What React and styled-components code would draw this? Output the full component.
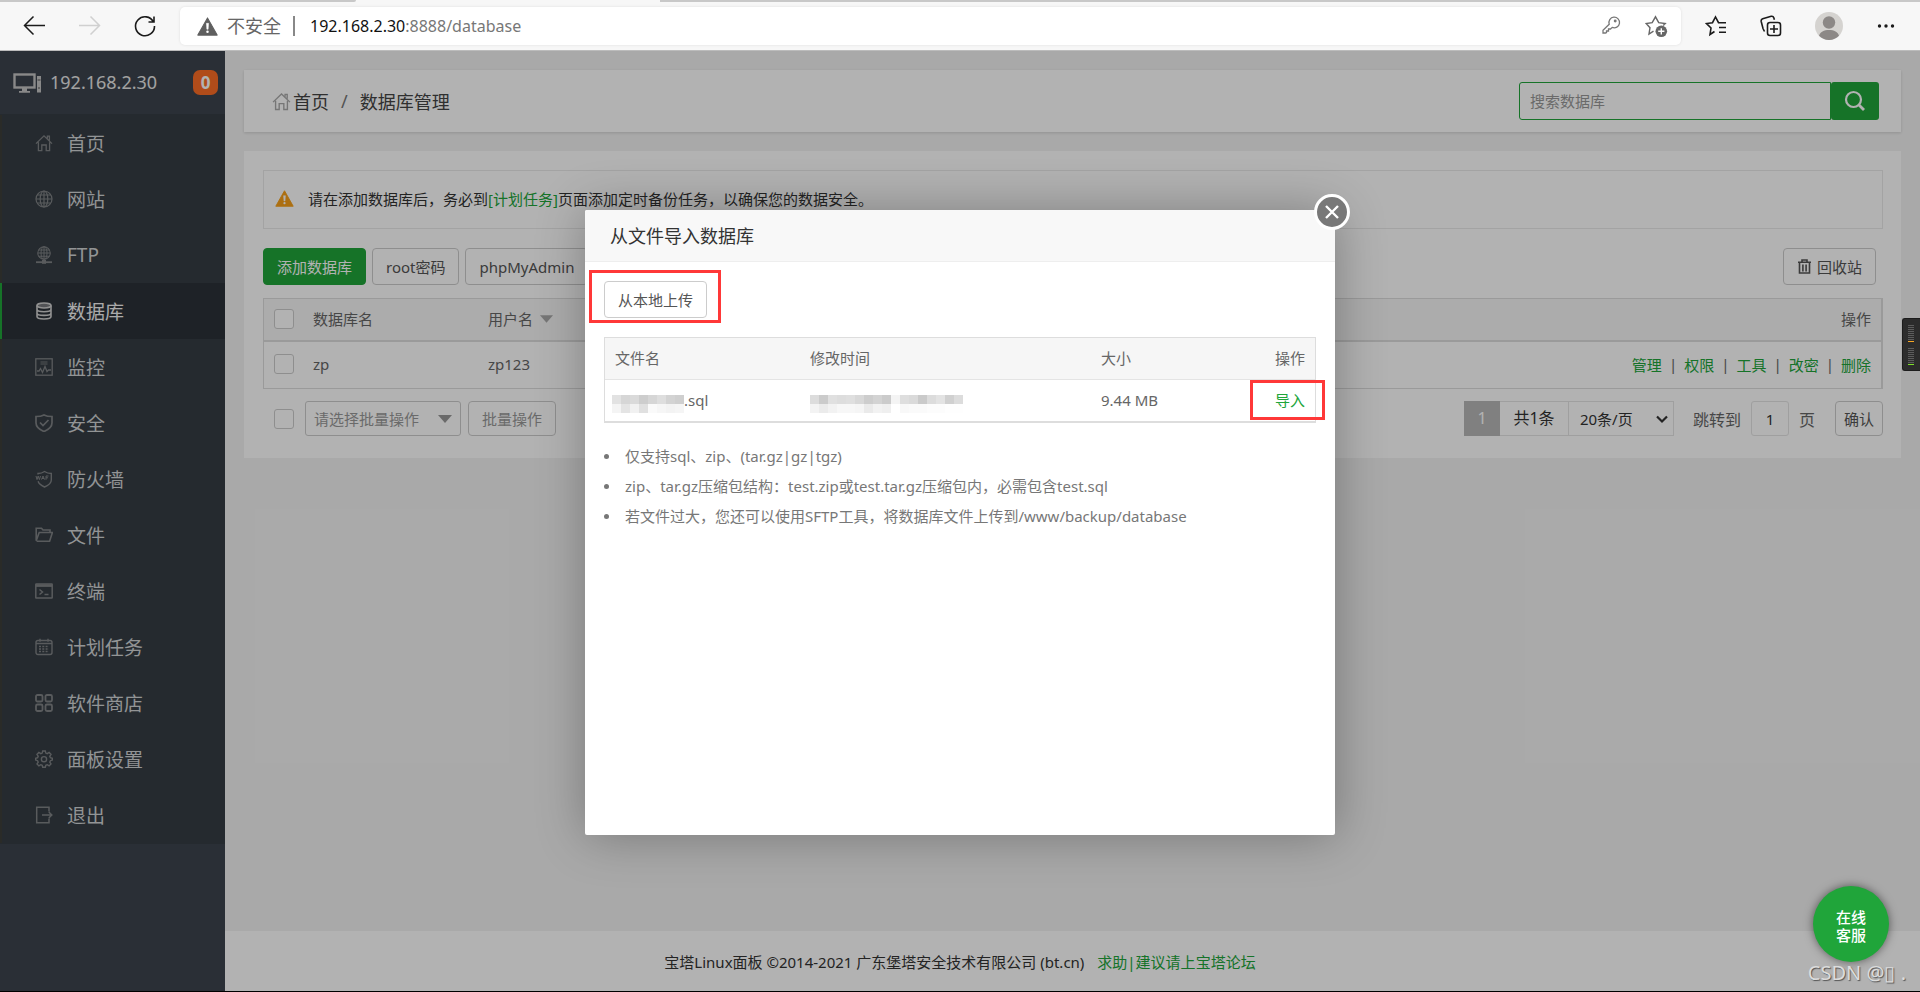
import React from "react";
import styled, { createGlobalStyle } from "styled-components";

const GlobalStyle = createGlobalStyle`
  *, *::before, *::after { box-sizing: border-box; }
  body { margin: 0; background: #f3f3f3; }
  body, button, input, select {
    font-family: "Noto Sans", "Noto Sans CJK SC", sans-serif;
    font-size: 15px;
  }
  button { cursor: pointer; }
  a { text-decoration: none; }
  svg { display: block; flex: none; }
`;

const GREEN = "#20a53a";

/* ---------- browser chrome ---------- */

const Screen = styled.div`
  display: flex;
  flex-direction: column;
  min-height: 100vh;
  border-bottom: 1px solid #000;
`;

const TabEdge = styled.div`
  display: flex;
  justify-content: space-between;
  height: 2px;
  background: #f7f7f7;
`;

const TabGroup = styled.div`
  flex: ${(p) => p.$grow};
  background: #c8c8c8;
  border-radius: 0 0 ${(p) => (p.$round ? "2px" : "0")} 0;
`;

const TabOpen = styled.div`
  flex: 304;
`;

const BrowserBar = styled.header`
  display: flex;
  align-items: center;
  height: 49px;
  padding: 0 24px 0 23px;
  background: #f7f7f7;
  border-bottom: 1px solid #bcbcbc;
`;

const NavButtons = styled.div`
  display: flex;
  gap: 32px;
  margin-right: 23px;
`;

const IconButton = styled.button`
  display: flex;
  padding: 0;
  border: 0;
  background: none;
  color: ${(p) => p.$color || "#1b1b1b"};
`;

const AddressBar = styled.div`
  display: flex;
  flex: 1;
  align-items: center;
  height: 38px;
  padding: 0 13px 0 17px;
  border-radius: 5px;
  background: #fff;
  box-shadow: 0 0 3px rgba(0, 0, 0, 0.1);
`;

const Insecure = styled.span`
  margin-left: 9px;
  padding-right: 12px;
  border-right: 2px solid #888;
  color: #666;
  font-size: 18px;
  line-height: 20px;
`;

const Address = styled.span`
  flex: 1;
  margin-left: 15px;
  color: #777;
  font-size: 16px;

  b { color: #111; font-weight: 400; }
`;

const AddressTools = styled.div`
  display: flex;
  gap: 24px;
`;

const BrowserTools = styled.div`
  display: flex;
  align-items: center;
  gap: 33px;
  margin-left: 24px;
`;

/* ---------- panel frame ---------- */

const Panel = styled.div`
  position: relative;
  display: flex;
  flex: 1;
`;

const Sidebar = styled.aside`
  flex: 0 0 225px;
  background: #3d444e;
`;

const Host = styled.div`
  display: flex;
  align-items: center;
  height: 63px;
  padding: 0 7px 0 13px;
  color: #e8e8e8;
  font-size: 18px;
`;

const HostName = styled.span`
  flex: 1;
  margin-left: 8px;
  padding-bottom: 2px;
`;

const Badge = styled.span`
  width: 25px;
  border-radius: 7px;
  background: #fc6d26;
  color: #fff;
  font-size: 17px;
  font-weight: 700;
  line-height: 25px;
  text-align: center;
`;

const Menu = styled.nav`
  padding: 1px 0;
  background: #353d44;
`;

const MenuItem = styled.a`
  display: flex;
  align-items: center;
  gap: 14px;
  height: 56px;
  padding-left: 33px;
  border-left: 2px solid ${(p) => (p.$active ? GREEN : "#3d3e3a")};
  background: ${(p) => (p.$active ? "#2c3138" : "transparent")};
  color: ${(p) => (p.$active ? "#f4f4f4" : "#d2d4d6")};
  font-size: 19px;

  svg { color: ${(p) => (p.$active ? "#d0d0d0" : "#808386")}; }
`;

const Main = styled.main`
  display: flex;
  flex: 1;
  flex-direction: column;
  gap: 19px;
  min-width: 0;
  padding-top: 19px;
  background: #f3f3f3;
`;

const Card = styled.section`
  margin: 0 19px;
  background: #fff;
`;

const CrumbCard = styled(Card)`
  display: flex;
  align-items: center;
  justify-content: space-between;
  height: 62px;
  padding: 0 22px 0 28px;
  box-shadow: 0 1px 3px rgba(0, 0, 0, 0.15);
`;

const Crumbs = styled.div`
  display: flex;
  align-items: center;
  color: #777;
  font-size: 18px;

  a { margin-left: 2px; color: #444; }
  i { margin: 0 12px; font-style: normal; }
  b { color: #444; font-weight: 400; }
  svg { color: #aaa; }
`;

const SearchForm = styled.form`
  display: flex;
  height: 38px;
`;

const SearchInput = styled.input`
  width: 312px;
  padding: 0 10px;
  border: 1px solid ${GREEN};
  border-radius: 3px 0 0 3px;
  background: #fff;

  &::placeholder { color: #999; }
`;

const SearchButton = styled.button`
  display: flex;
  align-items: center;
  justify-content: center;
  width: 48px;
  padding: 0;
  border: 0;
  border-radius: 3px;
  background: ${GREEN};
  color: #fff;
`;

const DataCard = styled(Card)`
  padding: 19px 18px 22px 19px;
`;

const Notice = styled.div`
  display: flex;
  align-items: center;
  gap: 14px;
  height: 59px;
  padding: 0 11px 2px;
  border: 1px solid #eaeaea;
  color: #333;

  a { color: ${GREEN}; }
`;

const Toolbar = styled.div`
  display: flex;
  gap: 6px;
  margin: 19px 7px 13px 0;
`;

const Button = styled.button`
  display: flex;
  align-items: center;
  gap: 5px;
  height: ${(p) => (p.$small ? "35px" : "37px")};
  padding: 0 ${(p) => (p.$tight ? "8px" : "13px")};
  border: 1px solid ${(p) => (p.$primary ? GREEN : "#ccc")};
  border-radius: 4px;
  background: ${(p) => (p.$primary ? GREEN : "#fff")};
  color: ${(p) => (p.$primary ? "#fff" : p.$muted ? "#999" : "#555")};
  white-space: nowrap;
`;

const PushRight = styled.div`
  margin-left: auto;
`;

const DataTable = styled.table`
  width: 100%;
  border: 1px solid #ddd;
  border-right-width: 2px;
  border-spacing: 0;
  table-layout: fixed;
  color: #666;

  th {
    height: 43px;
    padding: 0 10px 2px;
    border-bottom: 2px solid #ddd;
    background: #f6f6f6;
    font-weight: 400;
    text-align: left;
  }
  td { height: 46px; padding: 0 10px 2px; }
  th:last-child, td:last-child { text-align: right; }
`;

const Checkbox = styled.input.attrs({ type: "checkbox" })`
  display: block;
  width: 20px;
  height: 20px;
  margin: 0;
  border: 1px solid #ccc;
  border-radius: 3px;
  background: #fff;
  appearance: none;
`;

const SortLabel = styled.span`
  display: flex;
  align-items: center;
  gap: 7px;
  color: #666;

  svg { color: #aaa; }
`;

const Actions = styled.div`
  display: flex;
  justify-content: flex-end;
  gap: 7px;

  a { color: ${GREEN}; }
`;

const TableFoot = styled.div`
  display: flex;
  align-items: center;
  margin-top: 12px;
  padding-left: 11px;
`;

const Batch = styled.div`
  display: flex;
  align-items: center;
  gap: 7px;
  margin-left: 11px;
`;

const SelectBox = styled.div`
  position: relative;
  width: ${(p) => p.$width}px;

  svg {
    position: absolute;
    top: 50%;
    right: ${(p) => (p.$page ? "6px" : "9px")};
    transform: translateY(-50%);
    color: ${(p) => (p.$page ? "#333" : "#999")};
    pointer-events: none;
  }
`;

const Select = styled.select`
  width: 100%;
  height: 35px;
  padding: 0 ${(p) => (p.$page ? "11px" : "8px")};
  border: 1px solid ${(p) => (p.$page ? "#e4e4e4" : "#ccc")};
  border-left-width: ${(p) => (p.$page ? 0 : "1px")};
  border-radius: ${(p) => (p.$page ? 0 : "3px")};
  background: #fff;
  color: ${(p) => (p.$page ? "#333" : "#999")};
  appearance: none;
`;

const Pager = styled.div`
  display: flex;
  align-items: center;
  margin-left: auto;
  color: #666;
  font-size: 16px;
`;

const PageNow = styled.span`
  width: 36px;
  background: #b8b8b8;
  color: #fff;
  line-height: 35px;
  text-align: center;
`;

const PageTotal = styled.span`
  width: 69px;
  border: 1px solid #e4e4e4;
  border-left: 0;
  color: #333;
  line-height: 33px;
  text-align: center;
`;

const JumpLabel = styled.label`
  display: flex;
  align-items: center;
  gap: 10px;
  margin: 0 20px 0 19px;
`;

const JumpInput = styled.input`
  width: 38px;
  height: 35px;
  padding: 0;
  border: 1px solid #e4e4e4;
  border-radius: 3px;
  background: #fff;
  color: #333;
  text-align: center;
`;

const Footer = styled.footer`
  display: flex;
  align-items: center;
  justify-content: center;
  gap: 13px;
  height: 60px;
  margin-top: auto;
  padding-right: 225px;
  background: #fff;
  color: #333;

  a { color: ${GREEN}; }
`;

/* ---------- dialog ---------- */

const Overlay = styled.div`
  position: absolute;
  inset: 0;
  display: flex;
  align-items: center;
  justify-content: center;
  padding-top: 3px;
  background: rgba(0, 0, 0, 0.3);
`;

const Dialog = styled.div`
  position: relative;
  width: 750px;
  height: 625px;
  border-radius: 2px;
  background: #fff;
  box-shadow: 1px 1px 50px rgba(0, 0, 0, 0.3);
`;

const DialogTitle = styled.h2`
  height: 52px;
  margin: 0;
  padding: 0 25px;
  border-bottom: 1px solid #eee;
  border-radius: 2px 2px 0 0;
  background: #f8f8f8;
  color: #333;
  font-size: 18px;
  font-weight: 400;
  line-height: 52px;
`;

const CloseButton = styled.button`
  position: absolute;
  top: -16px;
  right: -15px;
  display: flex;
  align-items: center;
  justify-content: center;
  width: 36px;
  height: 36px;
  padding: 0;
  border: 3px solid #fff;
  border-radius: 50%;
  background: #787878;
  color: #fff;
`;

const DialogBody = styled.div`
  display: flex;
  flex-direction: column;
  align-items: flex-start;
  gap: 19px;
  padding: 19px;
`;

const Marked = styled.div`
  position: relative;

  &::after {
    position: absolute;
    inset: ${(p) => p.$inset};
    border: 3px solid #ff3838;
    content: "";
    pointer-events: none;
  }
`;

const FileTable = styled.table`
  width: 100%;
  border: 1px solid #ddd;
  border-bottom-width: 2px;
  border-spacing: 0;
  table-layout: fixed;
  color: #666;

  th {
    height: 42px;
    padding: 0 10px 2px;
    border-bottom: 1px solid #e4e4e4;
    background: #f6f6f6;
    font-weight: 400;
    text-align: left;
  }
  td { height: 41px; padding: 0 10px 2px; }
  th:last-child, td:last-child { text-align: right; }
`;

const FileName = styled.div`
  display: flex;
  align-items: center;
  margin-left: -3px;
`;

const MosaicBox = styled.svg`
  margin-top: 8px;
`;

const ImportLink = styled.a`
  color: ${GREEN};
`;

const ImportMark = styled(Marked)`
  display: inline-block;
`;

const Tips = styled.ul`
  margin: -1px 0 0;
  padding: 0;
  color: #777;
  line-height: 30px;
  list-style: none;
`;

const Tip = styled.li`
  display: flex;
  align-items: center;
  gap: 16px;

  &::before {
    width: 5px;
    height: 5px;
    border-radius: 50%;
    background: #777;
    content: "";
  }
`;

/* ---------- floating parts ---------- */

const ChatButton = styled.button`
  position: absolute;
  right: 31px;
  bottom: 29px;
  width: 76px;
  height: 76px;
  padding: 4px 20px 0;
  border: 0;
  border-radius: 50%;
  background: ${GREEN};
  box-shadow: 0 0 10px rgba(0, 0, 0, 0.5);
  color: #fff;
  font-weight: 500;
  line-height: 18px;
`;

const Watermark = styled.span`
  position: absolute;
  right: 14px;
  bottom: 4px;
  color: #dcdcdc;
  font-size: 20px;
  line-height: 28px;
  text-shadow: 1px 1px 1px #555;
`;

const Meter = styled.div`
  position: absolute;
  top: 267px;
  right: 0;
  display: flex;
  flex-direction: column;
  gap: 6px;
  width: 18px;
  height: 53px;
  padding: 6px 0 0 5px;
  border: 1px solid #1c1c1c;
  border-right: 0;
  border-radius: 3px 0 0 3px;
  background: #2c2c2c;
`;

/* ---------- drawings ---------- */

const Line = ({ size = 18, w = 1.3, children, vb = 18 }) => (
  <svg
    width={size}
    height={size}
    viewBox={`0 0 ${vb} ${vb}`}
    fill="none"
    stroke="currentColor"
    strokeWidth={w}
    aria-hidden="true"
  >
    {children}
  </svg>
);

const HomeIcon = ({ size = 18 }) => (
  <Line size={size}>
    <path d="M1 9.6 9 1.8l8 7.8M3.4 8.2V16.6h3.4V11h4.4v5.600h3.4V8.2M12.400 4.600V2.200h2v4.200" />
  </Line>
);

const GlobeLines = () => (
  <>
    <ellipse cx="9" cy="9" rx="3.8" ry="8" />
    <path d="M9 1v16M1 9h16M2.200 5h13.600M2.200 13h13.600" />
  </>
);

const WarnIcon = ({ w, h, fill }) => (
  <svg width={w} height={h} viewBox="0 0 20 18" aria-hidden="true">
    <path d="M10 .8 19.200 17.200H.8Z" fill={fill} stroke={fill} strokeLinejoin="round" />
    <path d="M9 6h2l-.4 5.600H9.400Z" fill="#fff" stroke="#fff" strokeWidth=".5" />
    <circle cx="10" cy="14" r="1.200" fill="#fff" />
  </svg>
);

const Triangle = ({ w, h }) => (
  <svg width={w} height={h} viewBox="0 0 14 8" aria-hidden="true">
    <path d="M0 0h14L7 8Z" fill="currentColor" />
  </svg>
);

const MENU = [
  ["首页", <HomeIcon />],
  ["网站", <Line w={1.2}><circle cx="9" cy="9" r="8" /><GlobeLines /></Line>],
  [
    "FTP",
    <Line w={1.3}>
      <g transform="translate(2 0) scale(.78)"><circle cx="9" cy="9" r="8" /><GlobeLines /></g>
      <path d="M1 16.200h16" strokeWidth="1.800" />
      <path d="M9 14v3.800" strokeWidth="4" />
    </Line>,
  ],
  [
    "数据库",
    <Line w={1.6}>
      <ellipse cx="9" cy="3.500" rx="7" ry="2.500" fill="currentColor" fillOpacity=".45" />
      <path d="M2 3.500v11c0 1.400 3 2.500 7 2.500s7-1.100 7-2.500v-11M2 7.200c0 1.400 3 2.500 7 2.500s7-1.100 7-2.500M2 10.900c0 1.400 3 2.500 7 2.500s7-1.100 7-2.500" />
    </Line>,
  ],
  [
    "监控",
    <Line>
      <rect x=".8" y=".8" width="16.400" height="16.400" />
      <path d="M5.500 4h7M5.500 6h7" opacity=".6" />
      <path d="M2 13h2l1.500-2.500 2 4 2.500-6 2 5 1.500-1.500H16" />
    </Line>,
  ],
  [
    "安全",
    <Line w={1.7}>
      <path d="M9 .9c2.500 1.300 5 1.600 8 1.600v6.300c0 4-3.500 6.900-8 8.700-4.500-1.800-8-4.700-8-8.700V2.500c3 0 5.500-.3 8-1.600Z" />
      <path d="m5 8.500 3 3 5.500-5.500" />
    </Line>,
  ],
  [
    "防火墙",
    <Line w={1.4}>
      <path d="M3 4.600V3.500c2.500 0 4.500-.6 6.500-2 2 1.400 4 2 6.800 2v6.500c0 3-3 5.400-6.800 7C6.200 15.400 3.700 13.400 3.100 11.200" />
      <path d="m1 6 1 3.600L3.200 6l1.200 3.600L5.500 6M6.500 9.600 8 6l1.500 3.600M7 8.500h2M11 9.800V6h2.500M11 7.800h2" strokeWidth="1" />
    </Line>,
  ],
  [
    "文件",
    <Line w={1.6}>
      <path d="M15 6.500V4H8L6.500 2.200H1.200v12.600L4.200 6.500h13.200l-2.800 8.800H1.600" />
    </Line>,
  ],
  [
    "终端",
    <Line w={1.5}>
      <rect x=".8" y="2" width="16.400" height="14" rx=".5" />
      <path d="M1 3.600h16" strokeWidth="2.600" />
      <path d="m4.500 7.500 3 2.500-3 2.500M9.500 12.500h4" />
    </Line>,
  ],
  [
    "计划任务",
    <Line w={1.4}>
      <rect x="1" y="2.500" width="16" height="14" rx="2" />
      <path d="M5 .8v3M13 .8v3M1 5.500h16" />
      <path d="M4 8.500h10M4 11h10M4 13.500h10" strokeDasharray="2 1.300" />
    </Line>,
  ],
  [
    "软件商店",
    <Line w={1.8}>
      <rect x="1" y="1" width="6.500" height="6.500" rx="1.500" />
      <rect x="10.500" y="1" width="6.500" height="6.500" rx="1.500" />
      <rect x="1" y="10.500" width="6.500" height="6.500" rx="1.500" />
      <rect x="10.500" y="10.500" width="6.500" height="6.500" rx="1.500" />
    </Line>,
  ],
  [
    "面板设置",
    <Line w={1.4}>
      <path d="M7.700 1h2.600l.5 2.100 1.400.6 1.900-1.200 1.900 1.900-1.200 1.900.6 1.400 1.900.5v1.900l-1.900.6-.6 1.400 1.200 1.900-1.900 1.900-1.900-1.200-1.400.6-.5 1.900H7.700l-.5-1.900-1.400-.6-1.900 1.200L2 14l1.200-1.900-.6-1.400-1.900-.6V8.200l1.900-.5.6-1.400L2 4.400l1.900-1.900 1.900 1.200 1.400-.6Z" />
      <circle cx="9" cy="9.200" r="2.600" />
    </Line>,
  ],
  [
    "退出",
    <Line w={1.5}>
      <path d="M14 5.500V1.200H1.700v15.600H14v-4.300M7 9h9.500M13.800 6l3 3-3 3" />
    </Line>,
  ],
];

const NAME_MOSAIC = [
  ["#e2e2e2", "#d6d6d6", "#dadada", "#cdcdcd", "#d6d6d6", "#dedede", "#d3d3d3", "#cfcfcf"],
  ["#f4f4f4", "#e4e4e4", "#f1f1f1", "#e0e0e0", "#fafafa", "#f6f6f6", "#f3f3f3", "#f5f5f5"],
];
const TIME_MOSAIC = [
  ["#dcdcdc", "#cbcbcb", "#e0e0e0", "#dddddd", "#dfdfdf", "#d8d8d8", "#cdcdcd", "#d3d3d3", "#cbcbcb", "#f4f4f4", "#dedede", "#dadada", "#cacaca", "#dcdcdc", "#e3e3e3", "#d0d0d0", "#dcdcdc"],
  ["#f3f3f3", "#ebebeb", "#f2f2f2", "#f7f7f7", "#f7f7f7", "#f5f5f5", "#eaeaea", "#f2f2f2", "#efefef", "#ffffff", "#f8f8f8", "#fafafa", "#fafafa", "#fcfcfc", "#fcfcfc", "#fefefe", "#fefefe"],
];

const Mosaic = ({ cells }) => (
  <MosaicBox width={cells[0].length * 9} height="18" aria-hidden="true">
    {cells.map((row, y) =>
      row.map((c, x) => (
        <rect key={`${x}-${y}`} x={x * 9} y={y * 9} width="9" height="9" fill={c} />
      ))
    )}
  </MosaicBox>
);

const MeterBars = ({ color }) => (
  <svg width="6" height="17" aria-hidden="true">
    {[0, 2, 4, 6, 8, 10, 12, 14].map((y) => (
      <rect key={y} y={y} width="6" height="1" fill="#5c5c5c" />
    ))}
    <rect y="16" width="6" height="1" fill={color} />
  </svg>
);

/* ---------- page ---------- */

function Browser() {
  return (
    <>
      <TabEdge>
        <TabGroup $grow={356} $round />
        <TabOpen />
        <TabGroup $grow={1260} />
      </TabEdge>
      <BrowserBar>
        <NavButtons>
          <IconButton aria-label="后退">
            <Line size={23} vb={23} w={1.5}><path d="M22 11.500H2M10.500 2.500l-9 9 9 9" /></Line>
          </IconButton>
          <IconButton aria-label="前进" $color="#d0d0d0">
            <Line size={23} vb={23} w={1.5}><path d="M1 11.500h20M12.500 2.500l9 9-9 9" /></Line>
          </IconButton>
          <IconButton aria-label="刷新">
            <Line size={24} vb={24} w={1.6}>
              <path d="M20.500 8A9.500 9.500 0 1 0 21.500 12M21 2.500V8h-5.500" />
            </Line>
          </IconButton>
        </NavButtons>
        <AddressBar>
          <WarnIcon w={21} h={19} fill="#5f5f5f" />
          <Insecure>不安全</Insecure>
          <Address><b>192.168.2.30</b>:8888/database</Address>
          <AddressTools>
            <IconButton aria-label="密码" $color="#777">
              <Line size={20} vb={20} w={1.3}>
                <path d="M8.200 9.200a5.300 5.300 0 1 1 3 3.200L9.500 14H7.500v2H5.500v1.500L4.500 18H2v-2.700Z" />
                <circle cx="14.200" cy="6" r=".8" fill="currentColor" />
              </Line>
            </IconButton>
            <IconButton aria-label="收藏" $color="#666">
              <Line size={23} vb={23} w={1.4}>
                <path d="M8.500 16.200 4 19l1-6.300L1.200 8.500l6-.8L10.500 1.800l3.200 5.900 6.500.8-2 2" />
                <circle cx="16.300" cy="16.300" r="5.800" fill="currentColor" stroke="none" />
                <path d="M16.300 13.200v6.200M13.200 16.300h6.200" stroke="#fff" />
              </Line>
            </IconButton>
          </AddressTools>
        </AddressBar>
        <BrowserTools>
          <IconButton aria-label="收藏夹">
            <Line size={22} vb={22} w={1.6}>
              <path d="M9.500 16.500 5 19.500l1-6.500L1.500 8.500l6-.8L10.500 2l3 5.700H21M14 12.500h7M14 17.300h7" />
            </Line>
          </IconButton>
          <IconButton aria-label="集锦">
            <Line size={22} vb={22} w={1.6}>
              <rect x="7.500" y="7.500" width="13" height="13" rx="2.500" />
              <path d="M14 10v8M10 14h8M4.500 16.500 3 13.500 1.200 6.500q-.4-2 1.500-2.700l8.500-2.500q2-.4 2.600 1.500l.6 2" />
            </Line>
          </IconButton>
          <IconButton aria-label="用户">
            <svg width="28" height="28" viewBox="0 0 28 28" aria-hidden="true">
              <circle cx="14" cy="14" r="14" fill="#d5d3d0" />
              <circle cx="14" cy="10.500" r="6.200" fill="#8c8886" />
              <path d="M4 23.800c1-4 5-5.800 10-5.800s9 1.800 10 5.800a14 14 0 0 1-20 0Z" fill="#8c8886" />
            </svg>
          </IconButton>
          <IconButton aria-label="更多">
            <svg width="20" height="20" viewBox="0 0 20 20" fill="currentColor" aria-hidden="true">
              <circle cx="3.500" cy="10" r="1.700" />
              <circle cx="10" cy="10" r="1.700" />
              <circle cx="16.500" cy="10" r="1.700" />
            </svg>
          </IconButton>
        </BrowserTools>
      </BrowserBar>
    </>
  );
}

function SideMenu() {
  return (
    <Sidebar>
      <Host>
        <svg width="29" height="22" viewBox="0 0 29 22" aria-hidden="true">
          <rect x="1.500" y="2.500" width="20" height="13" fill="none" stroke="#c4c4c4" strokeWidth="2.400" />
          <path d="M9 16h5v3h3v1.800H6V19h3Z" fill="#c4c4c4" />
          <rect x="24" y="4" width="4" height="16.500" fill="#c4c4c4" />
          <path d="M24.500 8h3M26 15v2" stroke="#555" />
        </svg>
        <HostName>192.168.2.30</HostName>
        <Badge>0</Badge>
      </Host>
      <Menu>
        {MENU.map(([label, icon]) => (
          <MenuItem key={label} href="#" $active={label === "数据库"}>
            {icon}
            {label}
          </MenuItem>
        ))}
      </Menu>
    </Sidebar>
  );
}

function Databases() {
  return (
    <DataCard>
      <Notice>
        <WarnIcon w={19} h={17} fill="#f7a01a" />
        <span>
          请在添加数据库后，务必到<a href="#">[计划任务]</a>页面添加定时备份任务，以确保您的数据安全。
        </span>
      </Notice>
      <Toolbar>
        <Button $primary>添加数据库</Button>
        <Button>root密码</Button>
        <Button>phpMyAdmin</Button>
        <PushRight>
          <Button>
            <Line size={15} vb={15} w={1.6}>
              <path d="M1 3.200h13M5 2.800V1h5v1.800M2.500 3.500v10.500h10V3.500M5.900 5.500v7M9.100 5.500v7" />
            </Line>
            回收站
          </Button>
        </PushRight>
      </Toolbar>
      <DataTable>
        <colgroup>
          <col style={{ width: 39 }} />
          <col style={{ width: 175 }} />
          <col style={{ width: 175 }} />
          <col />
        </colgroup>
        <thead>
          <tr>
            <th><Checkbox aria-label="全选" /></th>
            <th>数据库名</th>
            <th><SortLabel>用户名<Triangle w={13} h={8} /></SortLabel></th>
            <th>操作</th>
          </tr>
        </thead>
        <tbody>
          <tr>
            <td><Checkbox aria-label="zp" /></td>
            <td>zp</td>
            <td>zp123</td>
            <td>
              <Actions>
                {["管理", "权限", "工具", "改密", "删除"].map((t, i) => (
                  <React.Fragment key={t}>
                    {i > 0 && <span>|</span>}
                    <a href="#">{t}</a>
                  </React.Fragment>
                ))}
              </Actions>
            </td>
          </tr>
        </tbody>
      </DataTable>
      <TableFoot>
        <Checkbox aria-label="选择全部" />
        <Batch>
          <SelectBox $width={156}>
            <Select aria-label="批量操作类型"><option>请选择批量操作</option></Select>
            <Triangle w={14} h={8} />
          </SelectBox>
          <Button $small $muted>批量操作</Button>
        </Batch>
        <Pager>
          <PageNow>1</PageNow>
          <PageTotal>共1条</PageTotal>
          <SelectBox $width={105} $page>
            <Select $page aria-label="每页条数"><option>20条/页</option></Select>
            <Line size={12} vb={12} w={2.2}><path d="m1 3.500 5 5 5-5" /></Line>
          </SelectBox>
          <JumpLabel>
            跳转到
            <JumpInput defaultValue="1" />
            页
          </JumpLabel>
          <Button $small $tight>确认</Button>
        </Pager>
      </TableFoot>
    </DataCard>
  );
}

function ImportDialog() {
  return (
    <Dialog role="dialog" aria-label="从文件导入数据库">
      <DialogTitle>从文件导入数据库</DialogTitle>
      <CloseButton aria-label="关闭">
        <Line size={16} vb={16} w={2.4}><path d="m2 2 12 12M14 2 2 14" /></Line>
      </CloseButton>
      <DialogBody>
        <Marked $inset="-11px -14px -5px -15px">
          <Button>从本地上传</Button>
        </Marked>
        <FileTable>
          <colgroup>
            <col style={{ width: 195 }} />
            <col style={{ width: 291 }} />
            <col style={{ width: 140 }} />
            <col />
          </colgroup>
          <thead>
            <tr>
              <th>文件名</th>
              <th>修改时间</th>
              <th>大小</th>
              <th>操作</th>
            </tr>
          </thead>
          <tbody>
            <tr>
              <td><FileName><Mosaic cells={NAME_MOSAIC} />.sql</FileName></td>
              <td><Mosaic cells={TIME_MOSAIC} /></td>
              <td>9.44 MB</td>
              <td>
                <ImportMark $inset="-9px -20px -10px -25px">
                  <ImportLink href="#">导入</ImportLink>
                </ImportMark>
              </td>
            </tr>
          </tbody>
        </FileTable>
        <Tips>
          <Tip>仅支持sql、zip、(tar.gz|gz|tgz)</Tip>
          <Tip>zip、tar.gz压缩包结构：test.zip或test.tar.gz压缩包内，必需包含test.sql</Tip>
          <Tip>若文件过大，您还可以使用SFTP工具，将数据库文件上传到/www/backup/database</Tip>
        </Tips>
      </DialogBody>
    </Dialog>
  );
}

export default function App() {
  return (
    <Screen>
      <GlobalStyle />
      <Browser />
      <Panel>
        <SideMenu />
        <Main>
          <CrumbCard>
            <Crumbs>
              <HomeIcon size={19} />
              <a href="#">首页</a>
              <i>/</i>
              <b>数据库管理</b>
            </Crumbs>
            <SearchForm onSubmit={(e) => e.preventDefault()}>
              <SearchInput aria-label="搜索数据库" placeholder="搜索数据库" />
              <SearchButton aria-label="搜索">
                <Line size={22} vb={22} w={2.2}>
                  <circle cx="9.500" cy="9.500" r="7.500" />
                  <path d="m15 15 5 5" strokeWidth="2.800" />
                </Line>
              </SearchButton>
            </SearchForm>
          </CrumbCard>
          <Databases />
          <Footer>
            <span>宝塔Linux面板 ©2014-2021 广东堡塔安全技术有限公司 (bt.cn)</span>
            <a href="#">求助|建议请上宝塔论坛</a>
          </Footer>
        </Main>
        <Overlay>
          <ImportDialog />
        </Overlay>
        <Meter>
          <MeterBars color="#f5a623" />
          <MeterBars color="#7ee02a" />
        </Meter>
        <ChatButton>在线客服</ChatButton>
        <Watermark>CSDN @▯ .</Watermark>
      </Panel>
    </Screen>
  );
}
